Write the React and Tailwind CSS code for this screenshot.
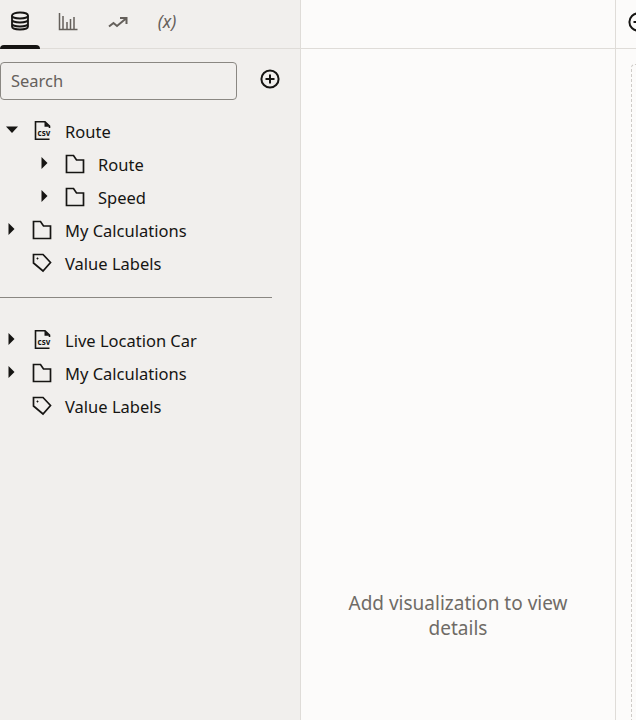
import React from 'react'

const Db = () => (
  <svg width="20" height="20" viewBox="0 0 20 20" fill="none" stroke="#161513" strokeWidth="1.8">
    <ellipse cx="10" cy="4.5" rx="8" ry="3" />
    <path d="M2 4.5v11c0 1.7 3.6 3 8 3s8-1.3 8-3v-11M2 8.5c0 1.7 3.6 3 8 3s8-1.3 8-3M2 12.5c0 1.7 3.6 3 8 3s8-1.3 8-3" />
  </svg>
)

const Bars = () => (
  <svg width="20" height="20" viewBox="0 0 20 20" fill="none" stroke="#65605b" strokeWidth="1.5">
    <path d="M1.5 2v16.5h18M5 5v13M9 11v7M12.5 8v10M16 6v12" />
  </svg>
)

const Trend = () => (
  <svg width="20" height="14" viewBox="0 0 20 14" fill="none" stroke="#65605b" strokeWidth="2">
    <path d="M1 10.5l4.5-3.5 3.5 3L18 2.5M12 2h6.5v6" />
  </svg>
)

const Plus = ({ size = 20 }) => (
  <svg width={size} height={size} viewBox="0 0 20 20" fill="none" stroke="#161513" strokeWidth="2">
    <circle cx="10" cy="10" r="8.6" />
    <path d="M10 5.5v9M5.5 10h9" />
  </svg>
)

const Folder = () => (
  <svg width="20" height="20" viewBox="0 0 20 20" fill="none" stroke="#161513" strokeWidth="1.7">
    <path d="M1.5 1.5h7l3 4.5h7v12.5h-17z" />
  </svg>
)

const Csv = () => (
  <svg width="20" height="20" viewBox="0 0 20 20" fill="none">
    <path d="M17.5 7V5l-4.5-4.2H3.5v17.5h14" stroke="#161513" strokeWidth="1.6" />
    <path d="M12.5 1v4.8h5z" fill="#161513" />
    <text x="5.5" y="15" fontSize="8" fontWeight="700" fontFamily="Noto Sans, sans-serif" fill="#161513">csv</text>
  </svg>
)

const Tag = () => (
  <svg width="20" height="20" viewBox="0 0 20 20" fill="none" stroke="#161513" strokeWidth="1.7">
    <path d="M1.5 1.5h9.5l7.5 8-7.5 8.5-9.5-8z" />
    <circle cx="5.5" cy="5.5" r="0.7" fill="#161513" strokeWidth="0.6" />
  </svg>
)

const Arrow = ({ open }) => open ? (
  <svg width="12" height="8" viewBox="0 0 12 8"><path d="M0 0.5h12L6 7z" fill="#161513" /></svg>
) : (
  <svg width="7" height="12" viewBox="0 0 7 12"><path d="M0.5 0v12L6.5 6z" fill="#161513" /></svg>
)

const Row = ({ arrow, open, icon, label, indent }) => (
  <div className={`flex items-center h-[33px] ${indent ? 'pl-[33px]' : ''}`}>
    <span className="w-[23px] flex items-center justify-center pb-[6px]">
      {arrow && <Arrow open={open} />}
    </span>
    <span className="w-[42px] flex pl-[9px] pb-[3px]">{icon}</span>
    <span className="text-[16.5px] text-[#161513]">{label}</span>
  </div>
)

export default function App() {
  return (
    <div className="flex h-[720px] w-[636px] overflow-hidden bg-[#fcfbfa] font-['Noto_Sans','Open_Sans',sans-serif]">
      {/* left panel */}
      <div className="w-[301px] shrink-0 bg-[#f1efed] border-r border-[#dfdcd8]">
        <div className="flex h-[49px] border-b border-[#dfdcd8] relative items-start pt-[11px]">
          <div className="w-[39px] flex justify-center"><Db /></div>
          <div className="ml-[9px] w-[40px] flex justify-center"><Bars /></div>
          <div className="ml-[10px] w-[40px] flex justify-center pt-[5px]"><Trend /></div>
          <div className="ml-[9px] w-[40px] text-center text-[17.5px] italic text-[#65605b] leading-[20px]">(x)</div>
          <div className="absolute left-0 bottom-[-1px] w-[40px] h-1 bg-[#161513] rounded-t-[4px]" />
        </div>
        <div className="flex items-center mt-[13px]">
          <div className="w-[237px] h-[38px] border border-[#8a8782] rounded-[4px] pl-[10px] flex items-center text-[16.5px] text-[#65605b]">
            Search
          </div>
          <div className="ml-[23px] mb-[4px]"><Plus /></div>
        </div>
        <div className="mt-[16px]">
          <Row arrow open icon={<Csv />} label="Route" />
          <Row arrow indent icon={<Folder />} label="Route" />
          <Row arrow indent icon={<Folder />} label="Speed" />
          <Row arrow icon={<Folder />} label="My Calculations" />
          <Row icon={<Tag />} label="Value Labels" />
        </div>
        <div className="w-[272px] h-px bg-[#8a8782] mt-[16px] mb-[27px]" />
        <div>
          <Row arrow icon={<Csv />} label="Live Location Car" />
          <Row arrow icon={<Folder />} label="My Calculations" />
          <Row icon={<Tag />} label="Value Labels" />
        </div>
      </div>
      {/* middle panel */}
      <div className="w-[315px] shrink-0 border-r border-[#dfdcd8] flex flex-col">
        <div className="h-[49px] border-b border-[#dfdcd8]" />
        <div className="flex-1 flex items-end justify-center pb-[79px]">
          <p className="w-[260px] text-center text-[19px] leading-[25px] text-[#6f6b66]">
            Add visualization to view details
          </p>
        </div>
      </div>
      {/* right panel */}
      <div className="flex-1 flex flex-col overflow-hidden">
        <div className="h-[49px] border-b border-[#dfdcd8] pl-[12px] pt-[12px]">
          <div className="w-5"><Plus /></div>
        </div>
        <div className="flex-1 pl-[15px] pt-[15px]">
          <div className="h-full border-l border-t border-dashed border-[#cfccc8] rounded-tl-[4px]" />
        </div>
      </div>
    </div>
  )
}
